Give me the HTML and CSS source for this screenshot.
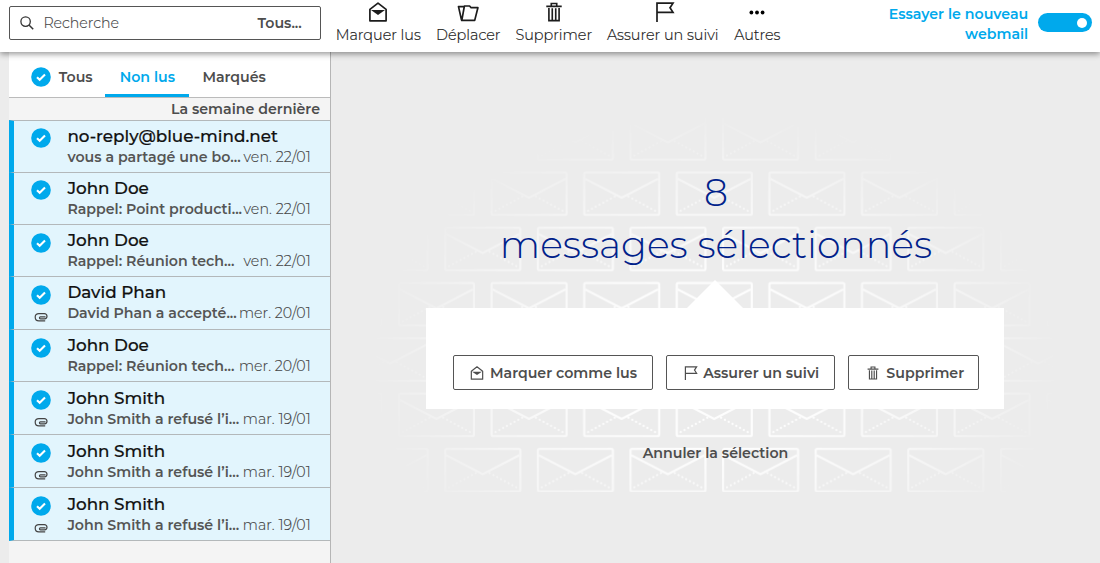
FILE: index.html
```html
<!DOCTYPE html>
<html lang="fr">
<head>
<meta charset="utf-8">
<title>Messagerie</title>
<link rel="stylesheet" href="styles.css">
</head>
<body>
<svg class="sprite" aria-hidden="true">
  <symbol id="i-read" viewBox="0 0 20 20"><path d="M1.9 7.4 10 1.2l8.1 6.2v11.4H1.9z" fill="none" stroke="currentColor" stroke-width="1.7" stroke-linejoin="round"/><path d="M3 8.1h14L10 13z" fill="currentColor"/></symbol>
  <symbol id="i-folder" viewBox="0 0 22 20"><path d="M4.8 18.4 7.4 4h5.2l1.5 1.7h6.8l-3.2 12.7zM4.6 18.4 1.5 4.6h5.4" fill="none" stroke="currentColor" stroke-width="1.7" stroke-linejoin="round"/></symbol>
  <symbol id="i-trash" viewBox="0 0 20 22"><path d="M1.5 4.8h17M7 4.6V1.6h6v3M4.4 6.5v14h11.2v-14M8.1 7v13M11.9 7v13" fill="none" stroke="currentColor" stroke-width="1.8"/></symbol>
  <symbol id="i-flag" viewBox="0 0 20 20"><path d="M2 20V1.2h16l-3 4.6 3 4.6H2" fill="none" stroke="currentColor" stroke-width="1.7"/></symbol>
  <symbol id="i-check" viewBox="0 0 20 20"><circle cx="10" cy="10" r="9.8" fill="#00a9ec"/><path d="m6 10.2 2.7 2.6 5.3-5.2" fill="none" stroke="#fff" stroke-width="2.1"/></symbol>
  <symbol id="i-clip" viewBox="0 0 14 10"><path d="M11.5 4.9H6.4a.9.9 0 0 0 0 1.9h4.1c1.5 0 2.5-.9 2.5-2.5s-1.1-2.6-2.6-2.6H4.9C2.6 1.7 1.2 2.9 1.2 5s1.4 3.9 3.7 3.9h6.3" fill="none" stroke="#444" stroke-width="1.2"/></symbol>
</svg>
<header class="topbar">
  <div class="search">
    <svg class="search-icon" viewBox="0 0 14 14"><circle cx="5.6" cy="5.6" r="4.7" fill="none" stroke="#333" stroke-width="1.3"/><path d="m9.2 9.2 4 4" stroke="#333" stroke-width="1.5"/></svg>
    <span class="placeholder">Recherche</span><span class="scope">Tous...</span>
  </div>
  <nav class="tools">
    <div class="tool w1"><svg class="ico"><use href="#i-read"/></svg><span>Marquer lus</span></div>
    <div class="tool w2"><svg class="ico wide"><use href="#i-folder"/></svg><span>Déplacer</span></div>
    <div class="tool w3"><svg class="ico"><use href="#i-trash"/></svg><span>Supprimer</span></div>
    <div class="tool w4"><svg class="ico flag"><use href="#i-flag"/></svg><span>Assurer un suivi</span></div>
    <div class="tool w5"><svg class="ico" viewBox="0 0 20 20"><circle cx="4.4" cy="10.5" r="1.9"/><circle cx="10" cy="10.5" r="1.9"/><circle cx="15.6" cy="10.5" r="1.9"/></svg><span>Autres</span></div>
  </nav>
  <div class="try"><span>Essayer le nouveau</span><span>webmail</span></div>
  <div class="switch"><i class="knob"></i></div>
</header>
<div class="body">
  <aside class="list">
    <div class="tabs">
      <svg class="check"><use href="#i-check"/></svg><span class="tab all">Tous</span>
      <span class="tab active">Non lus</span><span class="tab flagged">Marqués</span>
    </div>
    <div class="group">La semaine dernière</div>
    <div class="msg"><div class="mark"><svg class="check"><use href="#i-check"/></svg></div><div class="info"><div class="from">no-reply@blue-mind.net</div><div class="line"><span class="subj">vous a partagé une bo...</span><span class="date">ven. 22/01</span></div></div></div>
    <div class="msg"><div class="mark"><svg class="check"><use href="#i-check"/></svg></div><div class="info"><div class="from">John Doe</div><div class="line"><span class="subj">Rappel: Point producti...</span><span class="date">ven. 22/01</span></div></div></div>
    <div class="msg"><div class="mark"><svg class="check"><use href="#i-check"/></svg></div><div class="info"><div class="from">John Doe</div><div class="line"><span class="subj">Rappel: Réunion tech...</span><span class="date">ven. 22/01</span></div></div></div>
    <div class="msg clip"><div class="mark"><svg class="check"><use href="#i-check"/></svg><svg class="pin"><use href="#i-clip"/></svg></div><div class="info"><div class="from">David Phan</div><div class="line"><span class="subj">David Phan a accepté...</span><span class="date">mer. 20/01</span></div></div></div>
    <div class="msg"><div class="mark"><svg class="check"><use href="#i-check"/></svg></div><div class="info"><div class="from">John Doe</div><div class="line"><span class="subj">Rappel: Réunion tech...</span><span class="date">mer. 20/01</span></div></div></div>
    <div class="msg clip"><div class="mark"><svg class="check"><use href="#i-check"/></svg><svg class="pin"><use href="#i-clip"/></svg></div><div class="info"><div class="from">John Smith</div><div class="line"><span class="subj">John Smith a refusé l’i...</span><span class="date">mar. 19/01</span></div></div></div>
    <div class="msg clip"><div class="mark"><svg class="check"><use href="#i-check"/></svg><svg class="pin"><use href="#i-clip"/></svg></div><div class="info"><div class="from">John Smith</div><div class="line"><span class="subj">John Smith a refusé l’i...</span><span class="date">mar. 19/01</span></div></div></div>
    <div class="msg clip last"><div class="mark"><svg class="check"><use href="#i-check"/></svg><svg class="pin"><use href="#i-clip"/></svg></div><div class="info"><div class="from">John Smith</div><div class="line"><span class="subj">John Smith a refusé l’i...</span><span class="date">mar. 19/01</span></div></div></div>
  </aside>
  <main class="pane">
    <svg class="pattern" viewBox="331 52 769 511">
      <defs>
        <g id="env" fill="none" stroke="#fff" stroke-width="2.2"><rect x="1.1" y="1.1" width="75" height="42.5" rx="1.5"/><path d="M2 7.5 38.5 26.5 75 7.5"/><path d="M5 39.5 32 25M72 39.5 45 25" stroke-dasharray="0.1 4.2" stroke-linecap="round"/></g>
        <pattern id="rows" x="351.6" y="116" width="92.6" height="110.6" patternUnits="userSpaceOnUse"><use href="#env"/><use href="#env" x="46.3" y="55.3"/><use href="#env" x="-46.3" y="55.3"/></pattern>
        <radialGradient id="fade" gradientUnits="userSpaceOnUse" cx="0" cy="0" r="1" gradientTransform="translate(715 365) scale(350 255)"><stop offset=".3" stop-color="#fff" stop-opacity=".9"/><stop offset=".7" stop-color="#fff" stop-opacity=".5"/><stop offset="1" stop-color="#fff" stop-opacity="0"/></radialGradient>
        <mask id="m" maskUnits="userSpaceOnUse" x="331" y="52" width="769" height="511"><rect x="331" y="52" width="769" height="511" fill="url(#fade)"/></mask>
      </defs>
      <rect x="331" y="116" width="769" height="376" fill="url(#rows)" mask="url(#m)"/>
    </svg>
    <div class="content">
      <div class="title">8</div>
      <div class="title">messages sélectionnés</div>
      <div class="arrow"></div>
      <div class="card">
        <div class="btn b1"><svg class="bico"><use href="#i-read"/></svg><span>Marquer comme lus</span></div>
        <div class="btn b2"><svg class="bico flagico"><use href="#i-flag"/></svg><span>Assurer un suivi</span></div>
        <div class="btn b3"><svg class="bico"><use href="#i-trash"/></svg><span>Supprimer</span></div>
      </div>
      <div class="cancel">Annuler la sélection</div>
    </div>
  </main>
</div>
</body>
</html>
```
FILE: styles.css
```css
* { box-sizing: border-box; }
body { margin: 0; height: 563px; overflow: hidden; display: flex; flex-direction: column; background: #ececec; color: #4d4d4d; font-family: Montserrat, Inter, "Open Sans", sans-serif; font-size: 14.2px; white-space: nowrap; }
.sprite { position: absolute; width: 0; height: 0; }
.topbar { flex: none; display: flex; height: 52px; padding-left: 9.4px; background: #fff; box-shadow: 0 2px 6px rgba(0,0,0,.42); z-index: 1; }
.search { display: flex; align-items: center; width: 312px; height: 34px; margin-top: 6px; padding: 0 18.6px 0 10px; border: 1px solid #555; border-radius: 2px; }
.search-icon { width: 14px; height: 14px; margin-right: 9px; }
.placeholder { font-weight: 300; color: #444; -webkit-text-stroke: .15px; }
.scope { margin-left: auto; font-weight: 600; }
.tools { display: flex; gap: 15px; margin-left: 14.4px; color: #1c1c1c; font-weight: 300; font-size: 14.4px; }
.tool { display: flex; flex-direction: column; align-items: center; padding-top: 2px; line-height: 20px; }
.tool span { -webkit-text-stroke: .2px; }
.ico { width: 20px; height: 20px; margin-bottom: 3px; }
.w1 { width: 85px; } .w2 { width: 65px; } .w3 { width: 76px; } .w4 { width: 112px; } .w5 { width: 47px; }
.wide { width: 22px; }
.flag { margin-left: 4px; }
.try { display: flex; flex-direction: column; align-items: flex-end; margin-left: auto; padding-top: 4px; line-height: 20px; color: #00a9ec; font-weight: 600; }
.switch { display: flex; align-items: center; justify-content: flex-end; width: 54px; height: 19px; margin: 13px 8.4px 0 9.4px; padding-right: 5px; border-radius: 10px; background: #00a9ec; }
.knob { width: 10px; height: 10px; border-radius: 50%; background: #fff; }
.body { flex: 1; display: flex; padding-left: 9.4px; }
.list { width: 321.6px; border-right: 1px solid #b5b5b5; background: #f4f4f4; }
.tabs { display: flex; height: 45.6px; padding-left: 21.4px; align-items: center; background: #fff; border-bottom: 1px solid #bbb; font-weight: 600; }
.check { flex: none; display: block; width: 20px; height: 20px; }
.tabs .check { margin-top: 5px; }
.tab { line-height: 50px; height: 100%; }
.all { width: 46.6px; margin-left: 8px; }
.active { width: 84px; text-align: center; border-bottom: 3px solid #00a9ec; color: #00a9ec; }
.flagged { margin-left: 13px; }
.group { height: 22px; line-height: 22px; padding-right: 10px; text-align: right; font-weight: 600; }
.msg { display: flex; height: 52.2px; border-left: 5px solid #00a9ec; border-top: 1px solid #b3b8ba; background: #e2f5fd; }
.msg.clip { height: 53px; }
.msg.last { height: 54px; border-bottom: 1px solid #b3b8ba; }
.mark { display: flex; flex-direction: column; align-items: center; width: 53px; padding-top: 7.6px; }
.pin { flex: none; width: 14px; height: 10px; margin-top: 7px; }
.info { width: 243.4px; padding-top: 4.2px; }
.from { font-size: 16.8px; line-height: 23px; font-weight: 500; color: #111; -webkit-text-stroke: .2px; }
.line { display: flex; justify-content: space-between; line-height: 19.6px; }
.subj { font-weight: 600; color: #555; }
.date { font-weight: 300; color: #444; letter-spacing: .08px; -webkit-text-stroke: .15px; }
.pane { position: relative; flex: 1; }
.pattern { position: absolute; inset: 0; width: 769px; height: 511px; }
.content { position: relative; display: flex; flex-direction: column; align-items: center; padding: 115px 1px 0 0; }
.title { height: 52px; line-height: 52px; padding-left: 2px; font-size: 37.9px; font-weight: 260; color: #00218a; }
.arrow { width: 56px; height: 28px; margin-top: 9px; background: #fff; clip-path: polygon(50% 0, 100% 100%, 0 100%); }
.card { display: flex; gap: 13.2px; width: 578px; height: 100.5px; padding: 47px 0 0 27px; background: #fff; }
.btn { display: flex; align-items: center; height: 35px; border: 1px solid #555; border-radius: 2px; padding-left: 16px; font-weight: 600; }
.bico { width: 14px; height: 14px; margin-right: 6px; }
.flagico { margin-left: 1px; margin-right: 5px; }
.b1 { width: 200px; } .b2 { width: 169px; } .b3 { width: 131px; padding-left: 17px; }
.cancel { margin-top: 34px; padding-left: 1px; line-height: 20px; font-weight: 600; }
```
